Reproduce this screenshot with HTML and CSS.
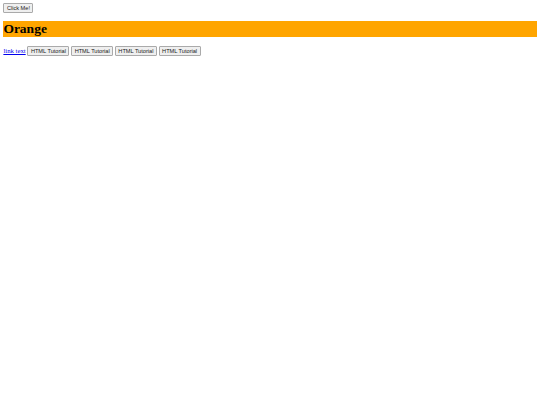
FILE: index.html
```html
<!DOCTYPE html>
<html>
<head>
<meta charset="utf-8">
<title>Orange</title>
<link rel="stylesheet" href="styles.css">
</head>
<body>
<button type="button" class="btn">Click Me!</button>
<h1 class="title">Orange</h1>
<p class="links"><a class="link" href="#">link text</a> <button class="btn">HTML Tutorial</button> <button class="btn">HTML Tutorial</button> <button class="btn">HTML Tutorial</button> <button class="btn">HTML Tutorial</button></p>
</body>
</html>
```
FILE: styles.css
```css
body {
  margin: 3.375px;
  font-family: "Liberation Serif", "Times New Roman", serif;
  font-size: 6.75px;
  background: #ffffff;
  color: #000000;
}
.btn {
  font-family: "Liberation Sans", Arial, sans-serif;
  font-size: 5.625px;
  line-height: normal;
  padding: 0.8px 2.53px;
  margin: 0;
  border: 1px solid #aaaaaa;
  border-radius: 1px;
  background-color: #efefef;
  color: #1a1a1a;
  vertical-align: baseline;
}
.title {
  background-color: #ffa500;
  font-size: 13.5px;
  font-weight: bold;
  margin: 8.2px 0 8.9px;
}
.links {
  margin: 6.75px 0;
}
.link {
  color: #0000ee;
  text-decoration: underline;
}
```
